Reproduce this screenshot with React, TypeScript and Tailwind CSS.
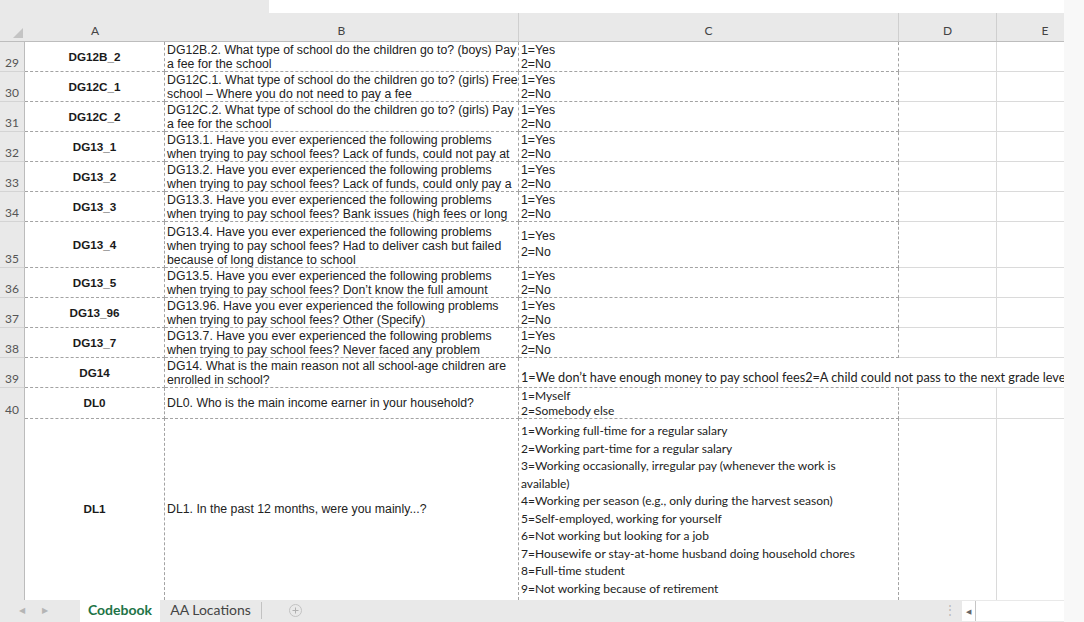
const ARIAL = "font-['Liberation_Sans',Arial,sans-serif] text-[12.3px] leading-[14px] text-[#222]";
const CALI = "font-['Lato','Noto_Sans',sans-serif] text-[12px] leading-[17.5px] text-[#222]";

const cols = "grid grid-cols-[25px_140px_354px_380px_98px_67px]";

type Row = { n: number; code: string; q: string[]; tall?: boolean };

const yesNoRows: Row[] = [
  {
    n: 29,
    code: "DG12B_2",
    q: ["DG12B.2. What type of school do the children go to? (boys) Pay", "a fee for the school"],
  },
  {
    n: 30,
    code: "DG12C_1",
    q: ["DG12C.1. What type of school do the children go to? (girls) Free", "school \u2013 Where you do not need to pay a fee"],
  },
  {
    n: 31,
    code: "DG12C_2",
    q: ["DG12C.2. What type of school do the children go to? (girls) Pay", "a fee for the school"],
  },
  {
    n: 32,
    code: "DG13_1",
    q: ["DG13.1. Have you ever experienced the following problems", "when trying to pay school fees? Lack of funds, could not pay at"],
  },
  {
    n: 33,
    code: "DG13_2",
    q: ["DG13.2. Have you ever experienced the following problems", "when trying to pay school fees? Lack of funds, could only pay a"],
  },
  {
    n: 34,
    code: "DG13_3",
    q: ["DG13.3. Have you ever experienced the following problems", "when trying to pay school fees? Bank issues (high fees or long"],
  },
  {
    n: 35,
    code: "DG13_4",
    tall: true,
    q: [
      "DG13.4. Have you ever experienced the following problems",
      "when trying to pay school fees? Had to deliver cash but failed",
      "because of long distance to school",
    ],
  },
  {
    n: 36,
    code: "DG13_5",
    q: ["DG13.5. Have you ever experienced the following problems", "when trying to pay school fees? Don\u2019t know the full amount"],
  },
  {
    n: 37,
    code: "DG13_96",
    q: ["DG13.96. Have you ever experienced the following problems", "when trying to pay school fees? Other (Specify)"],
  },
  {
    n: 38,
    code: "DG13_7",
    q: ["DG13.7. Have you ever experienced the following problems", "when trying to pay school fees? Never faced any problem"],
  },
];

const dl1Answers = [
  "1=Working full-time for a regular salary",
  "2=Working part-time for a regular salary",
  "3=Working occasionally, irregular pay (whenever the work is",
  "available)",
  "4=Working per season (e.g., only during the harvest season)",
  "5=Self-employed, working for yourself",
  "6=Not working but looking for a job",
  "7=Housewife or stay-at-home husband doing household chores",
  "8=Full-time student",
  "9=Not working because of retirement",
];

// cell styles
const numCell =
  "bg-[#e9e9e9] border-r border-b border-r-[#bcbcbc] border-b-[#d4d4d4] flex items-end justify-center pb-[1px] font-['Lato',sans-serif] text-[12px] leading-[14px] text-[#555]";
const codeCell =
  "border-r border-b border-dashed border-[#a3a3a3] flex items-center justify-center font-['Liberation_Sans',Arial,sans-serif] font-bold text-[11.7px] text-[#1a1a1a]";
const textCell =
  "border-r border-b border-dashed border-[#a3a3a3] flex flex-col pl-[2px] overflow-hidden whitespace-nowrap";
const dCell = "border-r border-b border-[#dadada]";
const eCell = "border-b border-[#dadada]";

function Lines({ lines, cls }: { lines: string[]; cls: string }) {
  return (
    <>
      {lines.map((l) => (
        <div key={l} className={cls}>
          {l}
        </div>
      ))}
    </>
  );
}

function YesNoRow({ r }: { r: Row }) {
  return (
    <div className={`${cols} ${r.tall ? "h-[46px]" : "h-[30px]"}`}>
      <div className={numCell}>{r.n}</div>
      <div className={codeCell}>{r.code}</div>
      <div className={`${textCell} justify-end`}>
        <Lines lines={r.q} cls={ARIAL} />
      </div>
      <div className={`${textCell} ${r.tall ? "justify-center pb-[2px]" : "justify-end"}`}>
        <div className={r.tall ? `${ARIAL} leading-[16px]` : ARIAL}>1=Yes</div>
        <div className={r.tall ? `${ARIAL} leading-[16px]` : ARIAL}>2=No</div>
      </div>
      <div className={dCell} />
      <div className={eCell} />
    </div>
  );
}

export default function App() {
  return (
    <div className="w-[1084px] h-[622px] flex overflow-hidden bg-white">
      <div className="w-[1064px] h-full flex flex-col overflow-hidden">
        {/* band above the column headers */}
        <div className="h-[13px] flex shrink-0">
          <div className="w-[269px] bg-[#e9e9e9]" />
          <div className="flex-1 bg-white" />
        </div>

        {/* column headers */}
        <div className={`${cols} h-[29px] shrink-0 bg-[#e9e9e9] border-b border-[#bdbdbd] font-['Lato',sans-serif] text-[12px] leading-[14px] text-[#444]`}>
          <div className="flex items-end justify-end pr-[2px] pb-[3px]">
            <svg width="10" height="10" viewBox="0 0 10 10">
              <polygon points="10,0 10,10 0,10" fill="#c4c4c4" />
            </svg>
          </div>
          <div className="flex items-end justify-center pb-[3px]">A</div>
          <div className="flex items-end justify-center pb-[3px] border-r border-[#cfcfcf]">B</div>
          <div className="flex items-end justify-center pb-[3px] border-r border-[#cfcfcf]">C</div>
          <div className="flex items-end justify-center pb-[3px] border-r border-[#cfcfcf]">D</div>
          <div className="flex items-end justify-center pb-[3px] pl-[29px]">E</div>
        </div>

        {/* body */}
        <div className="flex-1 flex flex-col overflow-hidden">
          {yesNoRows.map((r) => (
            <YesNoRow key={r.n} r={r} />
          ))}

          <div className={`${cols} h-[30px]`}>
            <div className={numCell}>39</div>
            <div className={codeCell}>DG14</div>
            <div className={`${textCell} justify-end`}>
              <Lines
                lines={["DG14. What is the main reason not all school-age children are", "enrolled in school?"]}
                cls={ARIAL}
              />
            </div>
            <div className="border-b border-dashed border-[#a3a3a3] flex flex-col justify-end pl-[2px] pb-[1px] whitespace-nowrap">
              <div className="font-['Lato','Noto_Sans',sans-serif] text-[12.7px] leading-[17.5px] text-[#222]">
                1=We don{"\u2019"}t have enough money to pay school fees2=A child could not pass to the next grade level
              </div>
            </div>
            <div className="border-b border-[#dadada]" />
            <div className="border-b border-[#dadada]" />
          </div>

          <div className={`${cols} h-[30px]`}>
            <div className={numCell}>40</div>
            <div className={codeCell}>DL0</div>
            <div className={`${textCell} justify-center`}>
              <div className={ARIAL}>DL0. Who is the main income earner in your household?</div>
            </div>
            <div className="border-r border-b border-dashed border-[#a3a3a3] flex flex-col justify-end pl-[2px] whitespace-nowrap">
              <div className="font-['Lato','Noto_Sans',sans-serif] text-[12px] leading-[15px] text-[#222]">1=Myself</div>
              <div className="font-['Lato','Noto_Sans',sans-serif] text-[12px] leading-[15px] text-[#222]">2=Somebody else</div>
            </div>
            <div className={dCell} />
            <div className={eCell} />
          </div>

          <div className={`${cols} flex-1`}>
            <div className="bg-[#e9e9e9] border-r border-[#bcbcbc]" />
            <div className="border-r border-dashed border-[#a3a3a3] flex items-center justify-center font-['Liberation_Sans',Arial,sans-serif] font-bold text-[11.7px] text-[#1a1a1a]">
              DL1
            </div>
            <div className="border-r border-dashed border-[#a3a3a3] flex flex-col justify-center pl-[2px] whitespace-nowrap">
              <div className={ARIAL}>DL1. In the past 12 months, were you mainly...?</div>
            </div>
            <div className="border-r border-dashed border-[#a3a3a3] flex flex-col justify-end pl-[2px] pb-[3px] whitespace-nowrap overflow-hidden">
              <Lines lines={dl1Answers} cls={CALI} />
            </div>
            <div className="border-r border-[#dadada]" />
            <div />
          </div>
        </div>

        {/* sheet tabs */}
        <div className="h-[22px] shrink-0 flex items-stretch bg-[#e9e9e9] font-['Lato',sans-serif] text-[14px] leading-[16px] text-[#444]">
          <div className="w-[80px] flex items-center text-[8px] text-[#b5b5b5] pb-[2px]">
            <span className="ml-[19px]">{"\u25C0"}</span>
            <span className="ml-[17px]">{"\u25B6"}</span>
          </div>
          <div className="w-[80px] bg-white flex items-center justify-center pb-[3px] font-bold text-[#217346]">Codebook</div>
          <div className="w-[102px] flex items-center justify-center mt-[2px] mb-[3px] pb-[2px] border-r border-[#c2c2c2]">AA Locations</div>
          <div className="flex items-center ml-[27px] pb-[2px]">
            <svg width="13" height="13" viewBox="0 0 13 13">
              <circle cx="6.5" cy="6.5" r="6" fill="none" stroke="#c2c2c2" />
              <path d="M6.5 3.5v6M3.5 6.5h6" stroke="#b0b0b0" />
            </svg>
          </div>
          <div className="flex-1" />
          <div className="flex items-center text-[#b8b8b8] text-[12px] pr-[6px] pb-[2px]">{"\u22EE"}</div>
          <div className="w-[102px] bg-white my-[1px] flex items-center">
            <div className="w-[14px] h-full flex items-center justify-center border-r border-[#c6c6c6] text-[7px] text-[#666]">
              {"\u25C0"}
            </div>
          </div>
        </div>
      </div>
      <div className="w-[20px] h-full bg-[#f8f8f8]" />
    </div>
  );
}
